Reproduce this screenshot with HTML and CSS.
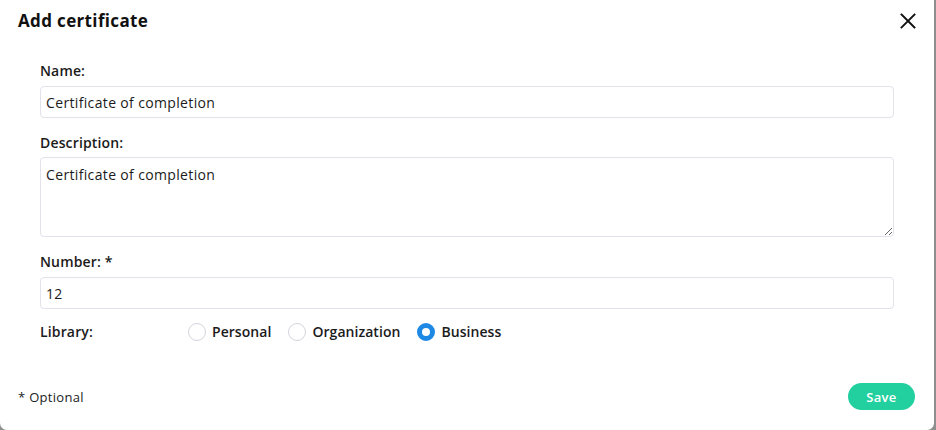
FILE: index.html
```html
<!DOCTYPE html>
<html lang="en">
<head>
<meta charset="utf-8">
<title>Add certificate</title>
<link rel="stylesheet" href="styles.css">
</head>
<body>
<div class="modal">
  <div class="header">
    <h1 class="title">Add certificate</h1>
    <button class="close" aria-label="Close">
      <svg width="16" height="16" viewBox="0 0 16 16"><path d="M1.5 1.5 L14.5 14.5 M14.5 1.5 L1.5 14.5" stroke="#111" stroke-width="1.9" fill="none" stroke-linecap="square"/></svg>
    </button>
  </div>
  <div class="body">
    <div class="field">
      <label class="label">Name:</label>
      <input class="input" type="text" value="Certificate of completion">
    </div>
    <div class="field">
      <label class="label">Description:</label>
      <textarea class="input textarea">Certificate of completion</textarea>
    </div>
    <div class="field">
      <label class="label">Number: *</label>
      <input class="input" type="text" value="12">
    </div>
    <div class="library">
      <span class="label lib-label">Library:</span>
      <label class="option"><input type="radio" name="lib" class="radio"><span>Personal</span></label>
      <label class="option"><input type="radio" name="lib" class="radio"><span>Organization</span></label>
      <label class="option"><input type="radio" name="lib" class="radio" checked><span>Business</span></label>
    </div>
  </div>
  <div class="footer">
    <span class="note">* Optional</span>
    <button class="save">Save</button>
  </div>
</div>
</body>
</html>
```

FILE: styles.css
```css
* { box-sizing: border-box; }
html, body { margin: 0; padding: 0; }
body {
  width: 936px;
  height: 430px;
  overflow: hidden;
  background: #8e8e8e;
  font-family: "Open Sans", "Noto Sans", sans-serif;
  color: #1b1b1b;
}
.modal {
  width: 934px;
  height: 430px;
  background: #fff;
  border-radius: 0 0 7px 7px;
  display: flex;
  flex-direction: column;
}
.header {
  height: 40px;
  display: flex;
  align-items: center;
  justify-content: space-between;
  padding: 2px 18px 0 18px;
}
.title {
  margin: 0;
  font-size: 17px;
  font-weight: 700;
  line-height: 20px;
  letter-spacing: 0.35px;
  color: #111;
}
.close {
  border: 0;
  background: none;
  padding: 0;
  width: 16px;
  height: 16px;
  display: flex;
  cursor: pointer;
}
.body {
  padding: 21px 40px 0 40px;
  display: flex;
  flex-direction: column;
}
.field {
  display: flex;
  flex-direction: column;
  gap: 5px;
  margin-bottom: 15px;
}
.label {
  font-size: 14px;
  font-weight: 600;
  line-height: 20px;
  letter-spacing: 0.15px;
  color: #1b1b1b;
}
.input {
  width: 100%;
  height: 32px;
  border: 1px solid #e2e2ea;
  border-radius: 4px;
  padding: 0 5px;
  font-family: inherit;
  font-size: 14px;
  letter-spacing: 0.35px;
  color: #1b1b1b;
  background: #fff;
  outline: none;
}
.textarea {
  height: 80px;
  padding: 7px 5px;
  line-height: 20px;
  resize: vertical;
  display: block;
  margin-top: -1px;
}
.library {
  display: flex;
  align-items: center;
  height: 20px;
  margin-top: -2px;
}
.lib-label {
  width: 148px;
}
.option {
  display: flex;
  align-items: center;
  gap: 6px;
  margin-right: 17px;
  font-size: 14px;
  font-weight: 600;
  line-height: 20px;
  letter-spacing: 0.05px;
  color: #1b1b1b;
}
.radio {
  appearance: none;
  -webkit-appearance: none;
  margin: 0;
  width: 18px;
  height: 18px;
  border: 1px solid #d4d4dc;
  border-radius: 50%;
  background: #fff;
}
.radio:checked {
  border: 5px solid #1e88e5;
  background: #fff;
}
.footer {
  margin-top: auto;
  display: flex;
  align-items: center;
  justify-content: space-between;
  padding: 0 19px 20px 18px;
}
.note {
  font-size: 13px;
  letter-spacing: 0.3px;
  color: #222;
}
.save {
  width: 67px;
  height: 27px;
  border: 0;
  border-radius: 14px;
  background: #22cf9e;
  color: #fff;
  font-family: inherit;
  font-size: 13px;
  font-weight: 600;
  letter-spacing: 0.3px;
  cursor: pointer;
}
```
